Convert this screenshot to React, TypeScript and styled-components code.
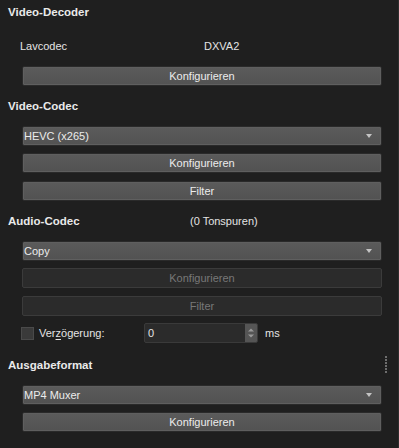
import React from "react";
import styled, { createGlobalStyle, css } from "styled-components";

type Section = {
  title: string;
  note?: string;
  grip?: boolean;
  top: number;
};

const GlobalStyle = createGlobalStyle`
  html, body {
    margin: 0;
    padding: 0;
    background: #1f1f1f;
  }
  body {
    font-family: "Liberation Sans", Arial, sans-serif;
    font-size: 11px;
    color: #e4e4e4;
  }
`;

function Header({ title, note, grip }: Omit<Section, "top">) {
  return (
    <TitleRow>
      <Title>{title}</Title>
      {note && <Note>{note}</Note>}
      {grip && <Grip />}
    </TitleRow>
  );
}

function Select({ value }: { value: string }) {
  return (
    <SelectBox>
      <span>{value}</span>
      <Arrow />
    </SelectBox>
  );
}

export default function App() {
  return (
    <>
      <GlobalStyle />
      <Panel>
        <Block $top={0}>
          <Header title="Video-Decoder" />
          <Body>
            <InfoRow>
              <span>Lavcodec</span>
              <span>DXVA2</span>
            </InfoRow>
            <Button>Konfigurieren</Button>
          </Body>
        </Block>

        <Block $top={8}>
          <Header title="Video-Codec" />
          <Body>
            <Select value="HEVC (x265)" />
            <Button>Konfigurieren</Button>
            <Button>Filter</Button>
          </Body>
        </Block>

        <Block $top={8}>
          <Header title="Audio-Codec" note="(0 Tonspuren)" />
          <Body>
            <Select value="Copy" />
            <Button disabled>Konfigurieren</Button>
            <Button disabled>Filter</Button>
            <DelayRow>
              <Check />
              <CheckLabel>
                Ver<u>z</u>ögerung:
              </CheckLabel>
              <Spin>
                <SpinValue>0</SpinValue>
                <SpinArrows>
                  <svg width="8" height="14" viewBox="0 0 8 14">
                    <path d="M1 5.5 L4 2.5 L7 5.5 Z" fill="#9a9a9a" />
                    <path d="M1 8.5 L4 11.5 L7 8.5 Z" fill="#9a9a9a" />
                  </svg>
                </SpinArrows>
              </Spin>
              <Unit>ms</Unit>
            </DelayRow>
          </Body>
        </Block>

        <Block $top={9.5}>
          <Header title="Ausgabeformat" grip />
          <Body>
            <Select value="MP4 Muxer" />
            <Button>Konfigurieren</Button>
          </Body>
        </Block>
      </Panel>
    </>
  );
}

const Panel = styled.div`
  width: 399px;
  height: 448px;
  box-sizing: border-box;
  border-right: 1px solid #2e2e2e;
  background: #1f1f1f;
  overflow: hidden;
`;

const Block = styled.section<{ $top: number }>`
  margin-top: ${(p) => p.$top}px;
`;

const TitleRow = styled.div`
  display: flex;
  align-items: center;
  height: 24px;
  padding: 0 11px 0 8px;
`;

const Title = styled.div`
  width: 182px;
  font-weight: bold;
  font-size: 11.5px;
  color: #eaeaea;
`;

const Note = styled.div`
  color: #e4e4e4;
`;

const Grip = styled.div`
  margin-left: auto;
  width: 2px;
  height: 17px;
  background: repeating-linear-gradient(
    to bottom,
    #6e6e6e 0 2px,
    transparent 2px 3px
  );
`;

const Body = styled.div`
  display: flex;
  flex-direction: column;
  gap: 7.5px;
  width: 360px;
  margin: 8px 0 0 22px;
`;

const InfoRow = styled.div`
  display: grid;
  grid-template-columns: 184px 1fr;
  align-items: center;
  height: 24px;
  padding-top: 2px;
  margin-left: -2px;
`;

const control = css`
  box-sizing: border-box;
  height: 20px;
  border-radius: 2px;
  font-family: "Liberation Sans", Arial, sans-serif;
  font-size: 11px;
`;

const Button = styled.button`
  ${control};
  width: 100%;
  padding: 0;
  border: 1px solid #2a2a2a;
  background: linear-gradient(#5b5b5b, #525252);
  box-shadow: inset 0 0 0 1px #5f5f5f;
  color: #ececec;
  text-align: center;

  &:disabled {
    border-color: #3b3b3b;
    background: #2b2b2b;
    box-shadow: none;
    color: #787878;
  }
`;

const SelectBox = styled.div`
  ${control};
  display: flex;
  align-items: center;
  justify-content: space-between;
  padding: 0 9px 0 1px;
  border: 1px solid #2a2a2a;
  background: linear-gradient(#5b5b5b, #525252);
  box-shadow: inset 0 0 0 1px #5f5f5f;
  color: #ececec;
`;

const Arrow = styled.div`
  width: 0;
  height: 0;
  border-left: 3.5px solid transparent;
  border-right: 3.5px solid transparent;
  border-top: 4px solid #c4c4c4;
`;

const DelayRow = styled.div`
  display: flex;
  align-items: center;
  height: 20px;
`;

const Check = styled.div`
  box-sizing: border-box;
  width: 13px;
  height: 13px;
  margin-left: -1px;
  border: 1px solid #4a4a4a;
  background: #3a3a3a;
`;

const CheckLabel = styled.span`
  width: 105px;
  margin-left: 5px;

  u {
    text-decoration-thickness: 1px;
    text-underline-offset: 2px;
  }
`;

const Spin = styled.div`
  ${control};
  display: flex;
  width: 114px;
  border: 1px solid #3a3a3a;
  background: #2b2b2b;
  overflow: hidden;
`;

const SpinValue = styled.span`
  flex: 1;
  padding-left: 3px;
  line-height: 18px;
  color: #e4e4e4;
`;

const SpinArrows = styled.div`
  display: flex;
  align-items: center;
  justify-content: center;
  width: 12px;
  background: #555;
`;

const Unit = styled.span`
  margin-left: 7px;
`;
